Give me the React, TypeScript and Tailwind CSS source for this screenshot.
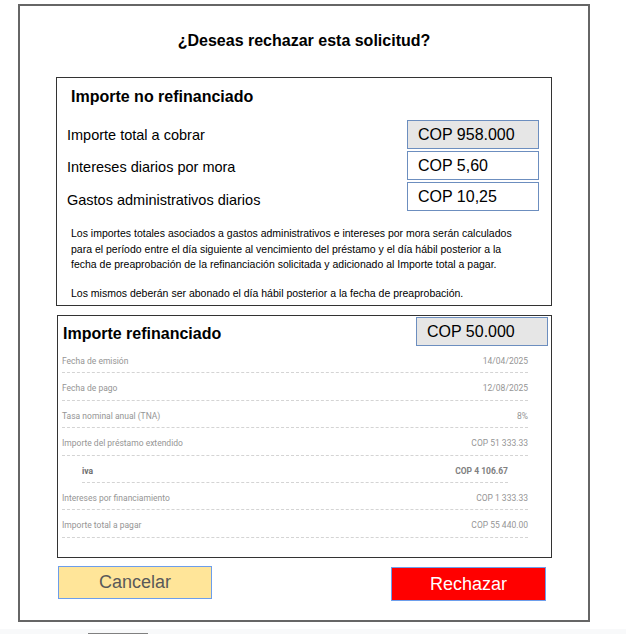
import React from 'react';

const arial = { fontFamily: '"Liberation Sans", Arial, sans-serif' };

const feeRows = [
  { label: 'Importe total a cobrar', value: 'COP 958.000', filled: true, labelPad: 'pt-0' },
  { label: 'Intereses diarios por mora', value: 'COP 5,60', filled: false, labelPad: 'pt-[2px]' },
  { label: 'Gastos administrativos diarios', value: 'COP 10,25', filled: false, labelPad: 'pt-[7px]' },
];

const detailRows = [
  { label: 'Fecha de emisión', value: '14/04/2025' },
  { label: 'Fecha de pago', value: '12/08/2025' },
  { label: 'Tasa nominal anual (TNA)', value: '8%' },
  { label: 'Importe del préstamo extendido', value: 'COP 51 333.33' },
  { label: 'iva', value: 'COP 4 106.67', sub: true },
  { label: 'Intereses por financiamiento', value: 'COP 1 333.33' },
  { label: 'Importe total a pagar', value: 'COP 55 440.00' },
];

const ValueBox: React.FC<{ value: string; filled?: boolean }> = ({ value, filled }) => (
  <div
    className={`w-[132px] h-[29px] flex items-center pl-[10px] border border-[#6c8ebf] text-[16px] text-black ${
      filled ? 'bg-[#e6e6e6]' : 'bg-white'
    }`}
  >
    {value}
  </div>
);

export default function App() {
  return (
    <div className="w-[626px] h-[634px] bg-white overflow-hidden" style={arial}>
      <div className="ml-[18px] mt-[4px] w-[572px] h-[618px] border-2 border-[#666] pt-[25px]">
        {/* Title */}
        <h1 className="text-center text-[16px] leading-[20px] font-bold text-black">
          ¿Deseas rechazar esta solicitud?
        </h1>

        {/* Importe no refinanciado */}
        <div className="ml-[36px] mt-[26px] w-[496px] h-[229px] border border-[#333] pt-[9px]">
          <h2 className="pl-[14px] text-[16px] leading-[20px] font-bold text-black">Importe no refinanciado</h2>
          <div className="mt-[13px] flex flex-col gap-[2px] pl-[10px] pr-[12px]">
            {feeRows.map((row) => (
              <div key={row.label} className="flex items-center justify-between">
                <span className={`text-[14.5px] leading-[18px] text-black ${row.labelPad}`}>{row.label}</span>
                <ValueBox value={row.value} filled={row.filled} />
              </div>
            ))}
          </div>
          <div className="mt-[15px] pl-[14px] text-[10.5px] leading-[15.5px] text-black">
            <p>
              Los importes totales asociados a gastos administrativos e intereses por mora serán calculados
              <br />
              para el período entre el día siguiente al vencimiento del préstamo y el día hábil posterior a la
              <br />
              fecha de preaprobación de la refinanciación solicitada y adicionado al Importe total a pagar.
            </p>
            <p className="mt-[13.5px]">Los mismos deberán ser abonado el día hábil posterior a la fecha de preaprobación.</p>
          </div>
        </div>

        {/* Importe refinanciado */}
        <div className="ml-[37px] mt-[9px] w-[495px] h-[243px] border border-[#333]">
          <div className="flex items-center justify-between pl-[5px] pr-[3px] pt-[1px]">
            <h2 className="pt-[4px] text-[16px] leading-[20px] font-bold text-black">Importe refinanciado</h2>
            <ValueBox value="COP 50.000" filled />
          </div>
          <div className="ml-[4px] mr-[23px]" style={{ fontFamily: 'Roboto, "Liberation Sans", sans-serif' }}>
            {detailRows.map((row) => (
              <div
                key={row.label}
                className={`flex justify-between pt-[9px] pb-[5px] border-b border-dashed border-[#d4d4d4] text-[8.5px] leading-[12.4px] ${
                  row.sub ? 'mx-[20px] font-bold text-[#6e6e6e]' : 'text-[#959595]'
                }`}
              >
                <span>{row.label}</span>
                <span className={row.sub ? 'text-[#808080]' : ''}>{row.value}</span>
              </div>
            ))}
          </div>
        </div>

        {/* Actions */}
        <div className="ml-[38px] mt-[8px] w-[488px] flex items-start justify-between">
          <button className="w-[154px] h-[33px] bg-[#ffe599] border border-[#6d9eeb] text-[18px] text-[#595959]">
            Cancelar
          </button>
          <button className="mt-[1px] w-[155px] h-[34px] bg-[#ff0000] border border-[#6d9eeb] text-[18px] text-white">
            Rechazar
          </button>
        </div>
      </div>

      {/* bottom strip */}
      <div className="mt-[7px] h-[5px] bg-[#f8f9fa] pt-[4px]">
        <div className="ml-[88px] w-[60px] h-[1px] bg-[#808080]" />
      </div>
    </div>
  );
}
